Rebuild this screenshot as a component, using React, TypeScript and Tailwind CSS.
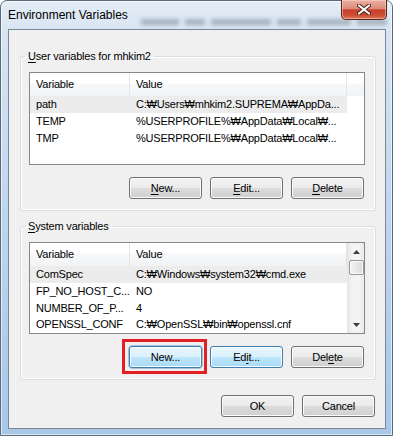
import type { ReactNode } from 'react'

type Row = { name: string; value: string; selected?: boolean }

const userRows: Row[] = [
  { name: 'path', value: 'C:₩Users₩mhkim2.SUPREMA₩AppDa...', selected: true },
  { name: 'TEMP', value: '%USERPROFILE%₩AppData₩Local₩...' },
  { name: 'TMP', value: '%USERPROFILE%₩AppData₩Local₩...' },
]

const systemRows: Row[] = [
  { name: 'ComSpec', value: 'C:₩Windows₩system32₩cmd.exe', selected: true },
  { name: 'FP_NO_HOST_C...', value: 'NO' },
  { name: 'NUMBER_OF_P...', value: '4' },
  { name: 'OPENSSL_CONF', value: 'C:₩OpenSSL₩bin₩openssl.cnf' },
]

function Mnemonic({ text, at }: { text: string; at: number }) {
  if (at < 0) return <>{text}</>
  return (
    <>
      {text.slice(0, at)}
      <span className="underline underline-offset-[2px]">{text[at]}</span>
      {text.slice(at + 1)}
    </>
  )
}

function Button({ label, at = -1, hot = false, focused = false }: { label: string; at?: number; hot?: boolean; focused?: boolean }) {
  const look = hot
    ? 'border-[#3c7fb1] bg-[linear-gradient(#eaf6fd_0%,#d9f0fc_50%,#bee6fd_51%,#a7d9f5_100%)]'
    : 'border-[#707070] bg-[linear-gradient(#f2f2f2_0%,#ebebeb_50%,#dddddd_51%,#cfcfcf_100%)]'
  return (
    <div
      className={`w-[73px] h-[22px] rounded-[3px] border ${look} shadow-[inset_0_0_0_1px_#fcfcfc] flex items-center justify-center text-[11px] leading-[13px] tracking-[-0.2px] text-black ${focused ? 'outline outline-1 outline-[#3c7fb1]/40' : ''}`}
    >
      <span><Mnemonic text={label} at={at} /></span>
    </div>
  )
}

function Arrow({ down = false }: { down?: boolean }) {
  return (
    <svg width="7" height="4" viewBox="0 0 7 4" className="block">
      {down ? <polygon points="0,0 7,0 3.5,4" fill="#3d3d3d" /> : <polygon points="0,4 7,4 3.5,0" fill="#3d3d3d" />}
    </svg>
  )
}

function ScrollBar() {
  return (
    <div className="w-[17px] h-full flex flex-col items-center bg-[linear-gradient(90deg,#e8e8e8,#f4f4f4_30%,#f4f4f4_70%,#eaeaea)] border-l border-[#e6e6e6]">
      <div className="h-[17px] flex items-center justify-center">
        <Arrow />
      </div>
      <div className="w-[15px] h-[15px] rounded-[2px] border border-[#979797] bg-[linear-gradient(90deg,#f3f3f3,#e8e8e8_50%,#d9d9d9)] shadow-[inset_0_0_0_1px_#fbfbfb]" />
      <div className="flex-1" />
      <div className="h-[17px] flex items-center justify-center">
        <Arrow down />
      </div>
    </div>
  )
}

function ListView({ rows, height, scroll = false }: { rows: Row[]; height: string; scroll?: boolean }) {
  return (
    <div className={`w-[336px] ${height} border border-[#828790] bg-white flex overflow-hidden`}>
      <div className="w-[317px] flex flex-col">
        <div className="h-[23px] flex bg-[linear-gradient(#ffffff_0%,#ffffff_45%,#f7f8f9_46%,#f2f3f5_100%)] text-[11px] tracking-[-0.2px] text-black">
          <div className="w-[100px] border-r border-[#e3e5e8] pl-[6px] flex items-center">Variable</div>
          <div className="w-[217px] border-r border-[#e3e5e8] pl-[6px] flex items-center">Value</div>
        </div>
        {rows.map((r) => (
          <div
            key={r.name}
            className={`h-[17px] flex items-center text-[11px] tracking-[-0.2px] text-black whitespace-nowrap ${r.selected ? 'bg-[#ececec]' : ''}`}
          >
            <div className="w-[100px] pl-[6px]">{r.name}</div>
            <div className="w-[217px] pl-[6px]">{r.value}</div>
          </div>
        ))}
      </div>
      {scroll ? (
        <ScrollBar />
      ) : (
        <div className="w-[17px] h-[23px] bg-[linear-gradient(#ffffff_0%,#ffffff_45%,#f7f8f9_46%,#f2f3f5_100%)]" />
      )}
    </div>
  )
}

function Group({ label, at, mt, children }: { label: string; at: number; mt: string; children: ReactNode }) {
  return (
    <fieldset className={`${mt} ml-[11px] w-[356px] border border-[#d5dfe5] rounded-[3px] shadow-[inset_0_0_0_1px_#ffffff] pl-[8px] pr-[10px] pt-[10px] pb-[11px]`}>
      <legend className="ml-[-4px] px-[3px] text-[11px] leading-[12px] tracking-[-0.2px] text-black">
        <Mnemonic text={label} at={at} />
      </legend>
      {children}
    </fieldset>
  )
}

export default function App() {
  return (
    <div className="w-[394px] h-[436px] bg-white font-['Liberation_Sans',Arial,sans-serif]">
      <div className="w-[393px] h-[436px] rounded-t-[7px] border border-[#5b6b7c] bg-[linear-gradient(180deg,#e4edf6_0%,#d6e4f2_8%,#c4d9ef_40%,#b3cdeb_75%,#a8c7e9_100%)] flex flex-col shadow-[inset_0_0_0_1px_rgba(255,255,255,0.6)]">
        <div className="relative h-[28px] flex items-start justify-between pl-[7px] pr-[5px]">
          {/* blurred content behind the glass */}
          <div className="absolute left-[140px] top-[18px] flex gap-[6px] blur-[2px] opacity-40">
            <div className="w-[38px] h-[6px] bg-[#56606c]" />
            <div className="w-[20px] h-[6px] bg-[#56606c]" />
            <div className="w-[60px] h-[6px] bg-[#56606c]" />
            <div className="w-[24px] h-[6px] bg-[#56606c]" />
            <div className="w-[44px] h-[6px] bg-[#56606c]" />
            <div className="w-[30px] h-[6px] bg-[#56606c]" />
          </div>
          <span className="relative mt-[7px] text-[12px] leading-[14px] text-black">Environment Variables</span>
          <div className="relative -mt-px w-[46px] h-[20px] rounded-b-[5px] border border-t-0 border-[#5a2219] bg-[linear-gradient(#eab0a3_0%,#dd8c7b_45%,#c7402b_52%,#cc4b33_80%,#e07b5c_100%)] shadow-[inset_0_0_0_1px_rgba(255,220,210,0.5)] flex items-center justify-center">
            <svg width="14" height="11" viewBox="0 0 14 11">
              <path d="M2 1.5 L12 9.5 M12 1.5 L2 9.5" stroke="#4a1d16" strokeWidth="4" strokeLinecap="round" />
              <path d="M2 1.5 L12 9.5 M12 1.5 L2 9.5" stroke="#ffffff" strokeWidth="2.2" strokeLinecap="round" />
            </svg>
          </div>
        </div>
        <div className="ml-[7px] mr-[6px] h-[400px] border border-[#7a8796] bg-[#f0f0f0] flex flex-col">
          <Group label="User variables for mhkim2" at={0} mt="mt-[20px]">
            <ListView rows={userRows} height="h-[93px]" />
            <div className="mt-[12px] flex justify-end gap-2 pr-px">
              <Button label="New..." at={0} />
              <Button label="Edit..." at={0} />
              <Button label="Delete" at={0} />
            </div>
          </Group>
          <Group label="System variables" at={0} mt="mt-[9px]">
            <ListView rows={systemRows} height="h-[92px]" scroll />
            <div className="mt-[12px] flex justify-end gap-2 pr-px">
              <div className="relative">
                <Button label="New..." hot focused />
                <span className="absolute -left-[7px] -right-[5px] -top-[7px] -bottom-[6px] border-[3px] border-[#e31e24]" />
              </div>
              <Button label="Edit..." at={2} hot />
              <Button label="Delete" at={3} />
            </div>
          </Group>
          <div className="mt-[15px] flex justify-end gap-2 pr-[10px]">
            <Button label="OK" />
            <Button label="Cancel" />
          </div>
        </div>
      </div>
    </div>
  )
}
